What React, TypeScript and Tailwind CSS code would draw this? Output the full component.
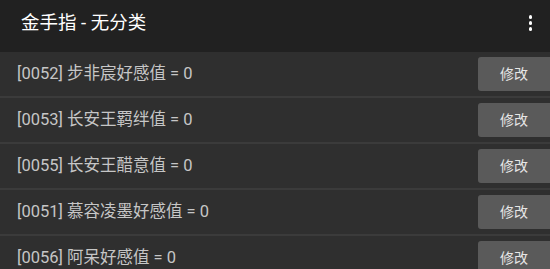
import React from "react";

const cheats = [
  { id: "0052", name: "步非宸好感值", value: 0 },
  { id: "0053", name: "长安王羁绊值", value: 0 },
  { id: "0055", name: "长安王醋意值", value: 0 },
  { id: "0051", name: "慕容凌墨好感值", value: 0 },
  { id: "0056", name: "阿呆好感值", value: 0 },
];

export default function App() {
  return (
    <div
      className="w-[550px] h-[269px] overflow-hidden bg-[#2f2f2f]"
      style={{ fontFamily: 'Roboto, "Noto Sans CJK SC", sans-serif' }}
    >
      {/* toolbar */}
      <div className="h-[52px] bg-[#212121] flex items-center justify-between pl-[21px] pr-[18px] pb-[6px]">
        <h1 className="text-[18.5px] text-white leading-none">金手指 - 无分类</h1>
        <div className="flex flex-col gap-[2.5px] items-center">
          <span className="w-[3.5px] h-[3.5px] rounded-full bg-white" />
          <span className="w-[3.5px] h-[3.5px] rounded-full bg-white" />
          <span className="w-[3.5px] h-[3.5px] rounded-full bg-white" />
        </div>
      </div>

      {/* list */}
      <div className="flex flex-col">
        {cheats.map((c) => (
          <div key={c.id} className="border-b-2 border-[#3b3b3b]">
            <div className="h-[44px] flex items-center justify-between pl-[17px]">
              <span className="text-[16.5px] text-[#c6c6c6] leading-none">
                [{c.id}] {c.name} = {c.value}
              </span>
              <button className="w-[72px] h-[34px] rounded-l-[3px] bg-[#5a5a5a] text-[14px] text-[#e6e6e6]">
                修改
              </button>
            </div>
          </div>
        ))}
      </div>
    </div>
  );
}
